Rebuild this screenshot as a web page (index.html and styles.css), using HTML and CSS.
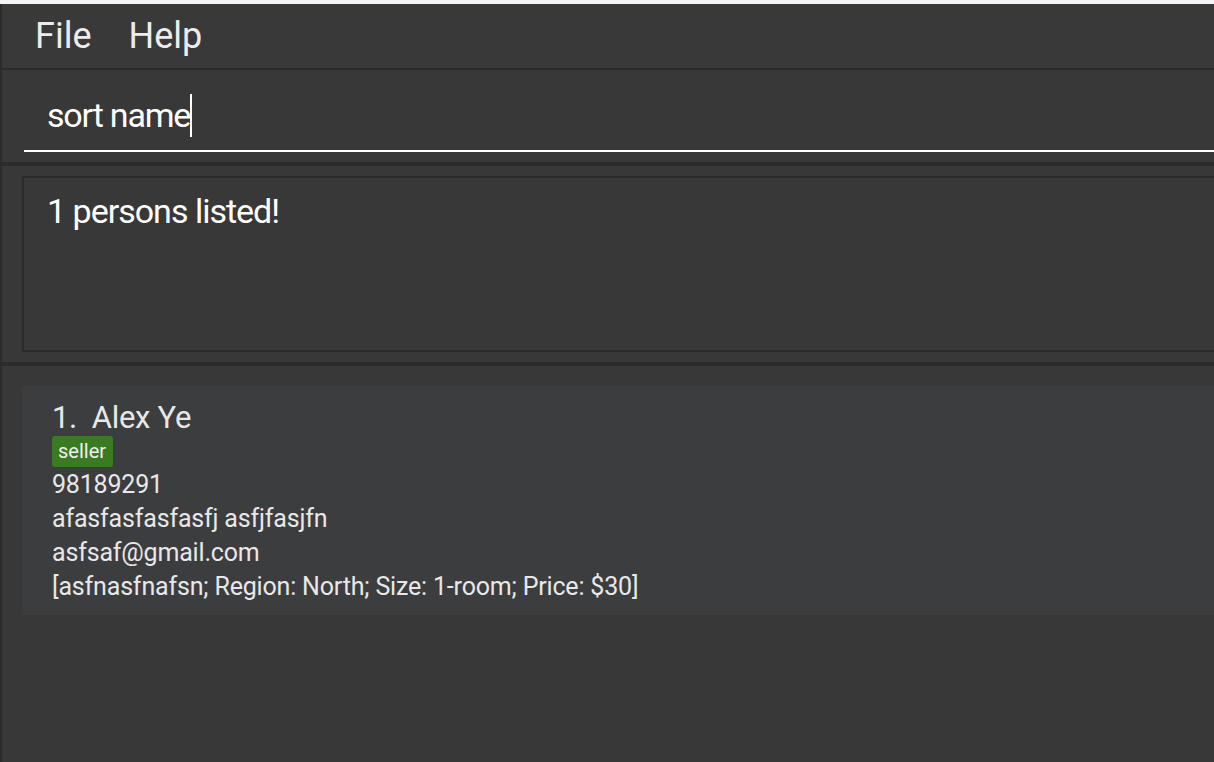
FILE: index.html
```html
<!DOCTYPE html>
<html>
<head>
<meta charset="utf-8">
<link rel="stylesheet" href="styles.css">
</head>
<body>
<div class="top-strip"></div>
<div class="app">
  <div class="menubar">
    <span class="menu-item">File</span>
    <span class="menu-item">Help</span>
  </div>
  <div class="command">
    <div class="command-field">
      <span class="command-text">sort name</span><span class="caret"></span>
    </div>
  </div>
  <div class="result-pane">
    <div class="result-box">1 persons listed!</div>
  </div>
  <div class="list">
    <div class="card">
      <div class="name">1.&nbsp; Alex Ye</div>
      <div class="tags"><span class="tag">seller</span></div>
      <div class="line">98189291</div>
      <div class="line">afasfasfasfasfj asfjfasjfn</div>
      <div class="line">asfsaf@gmail.com</div>
      <div class="line">[asfnasfnafsn; Region: North; Size: 1-room; Price: $30]</div>
    </div>
  </div>
</div>
</body>
</html>
```
FILE: styles.css
```css
* { box-sizing: border-box; }
html, body {
  margin: 0;
  padding: 0;
  width: 1214px;
  height: 762px;
  overflow: hidden;
  background: #383838;
  font-family: Roboto, Inter, sans-serif;
}
.top-strip {
  height: 5px;
  background: #f6f3f8;
  border-bottom: 1px solid #2a2a2a;
}
.app {
  height: 758px;
  border-left: 2px solid #2b2b2b;
  display: flex;
  flex-direction: column;
  background: #383838;
  margin-top: -1px;
}
.menubar {
  height: 66px;
  padding: 14px 0 0 33px;
  display: flex;
  align-items: flex-start;
  gap: 37px;
  border-bottom: 2px solid #2b2b2b;
  background: #393939;
}
.menu-item {
  color: #ececec;
  font-size: 36px;
  line-height: 36px;
}
.command {
  height: 96px;
  padding: 0 0 0 22px;
  border-bottom: 4px solid #2b2b2b;
}
.command-field {
  height: 82px;
  border-bottom: 2px solid #ffffff;
  padding: 24px 0 0 23px;
  display: flex;
  align-items: flex-start;
}
.command-text {
  color: #ffffff;
  font-size: 34px;
  line-height: 43px;
  letter-spacing: -1.2px;
}
.caret {
  width: 2px;
  height: 43px;
  background: #ffffff;
  margin-left: 0;
}
.result-pane {
  height: 200px;
  padding: 10px 0 10px 20px;
  border-bottom: 4px solid #2b2b2b;
}
.result-box {
  height: 176px;
  border: 2px solid #2b2b2b;
  border-right: none;
  padding: 13px 0 0 23px;
  color: #ffffff;
  font-size: 34px;
  line-height: 40px;
  letter-spacing: -1px;
}
.list {
  flex: 1;
  padding: 20px 0 0 20px;
  background: #383838;
}
.card {
  background: #3c3d3f;
  padding: 13px 0 11px 30px;
  color: #e8e8e8;
}
.name {
  font-size: 31px;
  line-height: 37px;
  letter-spacing: -0.3px;
}
.tags {
  height: 32px;
  display: flex;
  align-items: flex-start;
}
.tag {
  background: #3a7a22;
  color: #f0f0f0;
  font-size: 20px;
  line-height: 31px;
  height: 31px;
  padding: 0 7px 0 6px;
  border-radius: 3px;
}
.line {
  font-size: 25px;
  line-height: 34px;
  letter-spacing: -0.18px;
}
```
